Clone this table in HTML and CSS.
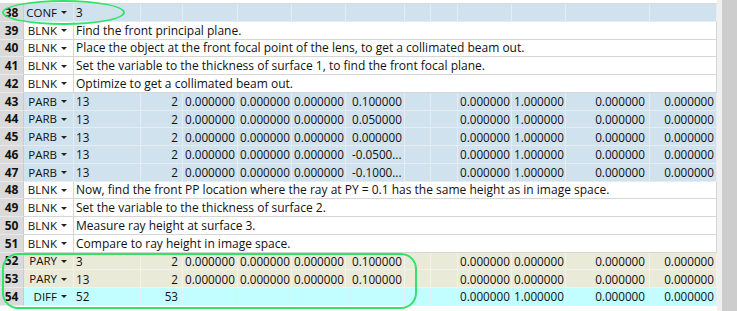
FILE: index.html
```html
<!DOCTYPE html>
<html lang="en">
<head>
<meta charset="utf-8">
<title>Merit Function Editor</title>
<link rel="stylesheet" href="styles.css">
</head>
<body>
<div class="editor">
  <div class="sheet">
    <div class="rows">
      <div class="row conf">
        <div class="c num">38</div><div class="c type">CONF<span class="caret"></span></div>
        <div class="c">3</div><div class="c"></div><div class="c"></div><div class="c"></div><div class="c"></div><div class="c"></div><div class="c"></div><div class="c"></div><div class="c"></div><div class="c"></div><div class="c"></div><div class="c"></div>
      </div>
      <div class="row blnk"><div class="c num">39</div><div class="c type">BLNK<span class="caret"></span></div><div class="c comment">Find the front principal plane.</div></div>
      <div class="row blnk"><div class="c num">40</div><div class="c type">BLNK<span class="caret"></span></div><div class="c comment">Place the object at the front focal point of the lens, to get a collimated beam out.</div></div>
      <div class="row blnk"><div class="c num">41</div><div class="c type">BLNK<span class="caret"></span></div><div class="c comment">Set the variable to the thickness of surface 1, to find the front focal plane.</div></div>
      <div class="row blnk"><div class="c num">42</div><div class="c type">BLNK<span class="caret"></span></div><div class="c comment">Optimize to get a collimated beam out.</div></div>

      <div class="row parb">
        <div class="c num">43</div><div class="c type">PARB<span class="caret"></span></div>
        <div class="c">13</div><div class="c r">2</div><div class="c">0.000000</div><div class="c">0.000000</div><div class="c">0.000000</div><div class="c f">0.100000</div><div class="c"></div><div class="c"></div><div class="c">0.000000</div><div class="c">1.000000</div><div class="c r">0.000000</div><div class="c r">0.000000</div>
      </div>
      <div class="row parb">
        <div class="c num">44</div><div class="c type">PARB<span class="caret"></span></div>
        <div class="c">13</div><div class="c r">2</div><div class="c">0.000000</div><div class="c">0.000000</div><div class="c">0.000000</div><div class="c f">0.050000</div><div class="c"></div><div class="c"></div><div class="c">0.000000</div><div class="c">1.000000</div><div class="c r">0.000000</div><div class="c r">0.000000</div>
      </div>
      <div class="row parb">
        <div class="c num">45</div><div class="c type">PARB<span class="caret"></span></div>
        <div class="c">13</div><div class="c r">2</div><div class="c">0.000000</div><div class="c">0.000000</div><div class="c">0.000000</div><div class="c f">0.000000</div><div class="c"></div><div class="c"></div><div class="c">0.000000</div><div class="c">1.000000</div><div class="c r">0.000000</div><div class="c r">0.000000</div>
      </div>
      <div class="row parb">
        <div class="c num">46</div><div class="c type">PARB<span class="caret"></span></div>
        <div class="c">13</div><div class="c r">2</div><div class="c">0.000000</div><div class="c">0.000000</div><div class="c">0.000000</div><div class="c f">-0.0500...</div><div class="c"></div><div class="c"></div><div class="c">0.000000</div><div class="c">1.000000</div><div class="c r">0.000000</div><div class="c r">0.000000</div>
      </div>
      <div class="row parb">
        <div class="c num">47</div><div class="c type">PARB<span class="caret"></span></div>
        <div class="c">13</div><div class="c r">2</div><div class="c">0.000000</div><div class="c">0.000000</div><div class="c">0.000000</div><div class="c f">-0.1000...</div><div class="c"></div><div class="c"></div><div class="c">0.000000</div><div class="c">1.000000</div><div class="c r">0.000000</div><div class="c r">0.000000</div>
      </div>

      <div class="row blnk"><div class="c num">48</div><div class="c type">BLNK<span class="caret"></span></div><div class="c comment">Now, find the front PP location where the ray at PY = 0.1 has the same height as in image space.</div></div>
      <div class="row blnk"><div class="c num">49</div><div class="c type">BLNK<span class="caret"></span></div><div class="c comment">Set the variable to the thickness of surface 2.</div></div>
      <div class="row blnk"><div class="c num">50</div><div class="c type">BLNK<span class="caret"></span></div><div class="c comment">Measure ray height at surface 3.</div></div>
      <div class="row blnk"><div class="c num">51</div><div class="c type">BLNK<span class="caret"></span></div><div class="c comment">Compare to ray height in image space.</div></div>

      <div class="row pary">
        <div class="c num">52</div><div class="c type">PARY<span class="caret"></span></div>
        <div class="c">3</div><div class="c r">2</div><div class="c">0.000000</div><div class="c">0.000000</div><div class="c">0.000000</div><div class="c f">0.100000</div><div class="c"></div><div class="c"></div><div class="c">0.000000</div><div class="c">0.000000</div><div class="c r">0.000000</div><div class="c r">0.000000</div>
      </div>
      <div class="row pary">
        <div class="c num">53</div><div class="c type">PARY<span class="caret"></span></div>
        <div class="c">13</div><div class="c r">2</div><div class="c">0.000000</div><div class="c">0.000000</div><div class="c">0.000000</div><div class="c f">0.100000</div><div class="c"></div><div class="c"></div><div class="c">0.000000</div><div class="c">0.000000</div><div class="c r">0.000000</div><div class="c r">0.000000</div>
      </div>
      <div class="row diff">
        <div class="c num">54</div><div class="c type">DIFF<span class="caret"></span></div>
        <div class="c">52</div><div class="c r">53</div><div class="c"></div><div class="c"></div><div class="c"></div><div class="c"></div><div class="c"></div><div class="c"></div><div class="c">0.000000</div><div class="c">1.000000</div><div class="c r">0.000000</div><div class="c r">0.000000</div>
      </div>
    </div>
  </div>
  <div class="vscroll"><div class="thumb"></div></div>
</div>
<div class="mark mark-conf"></div>
<div class="mark mark-group"></div>
</body>
</html>
```
FILE: styles.css
```css
* { box-sizing: border-box; margin: 0; padding: 0; }
html, body { background: #ffffff; }
body {
  width: 737px;
  height: 311px;
  overflow: hidden;
  position: relative;
  font-family: "Open Sans", "Noto Sans", sans-serif;
  font-size: 11.7px;
  color: #111111;
}
.editor { display: flex; height: 311px; }
.sheet { width: 717px; padding-top: 3px; }
.rows { border-top: 1px solid #dadada; }
.row {
  display: grid;
  grid-template-columns: 24px 50px 67px 42px 55px 54px 54px 59px 26px 27px 54px 54px 84px 67px;
  height: 17.75px;
  --line: #d9d9d9;
}
.c {
  display: flex;
  align-items: center;
  padding: 0 2px;
  border-right: 1px solid var(--line);
  border-bottom: 1px solid var(--line);
  white-space: nowrap;
  overflow: hidden;
  min-width: 0;
}
.c.r { justify-content: flex-end; padding-right: 4px; }
.c.f { padding-left: 6px; }
.row .c:last-child { padding-right: 2px; }
.num {
  justify-content: center;
  font-weight: 700;
  font-size: 12px;
  background: #dadada;
  color: #111;
  border-right-color: #cbcbcb;
  border-bottom-color: #e9e9e9;
  padding: 0;
}
.type { justify-content: flex-end; padding-right: 6px; gap: 4px; font-size: 11.5px; }
.caret {
  width: 0;
  height: 0;
  border-left: 3px solid transparent;
  border-right: 3px solid transparent;
  border-top: 3.5px solid #222;
  margin-top: 1px;
}
.comment { grid-column: 3 / -1; font-size: 12px; }
.blnk { background: #ffffff; --line: #d6d6d6; }
.conf, .parb { background: #d0e2ee; --line: #e5edf3; }
.pary { background: #eaead8; --line: #f3f3ea; }
.diff { background: #c2fdff; --line: #e3f3f3; }
.vscroll { width: 20px; background: #f0f0f0; padding-left: 5px; }
.thumb { height: 100%; background: #cdcdcd; }
.mark {
  position: absolute;
  border: 2px solid #33e26b;
}
.mark-conf { left: 2px; top: 0; width: 123px; height: 25px; border-radius: 50%; }
.mark-group { left: 2px; top: 253px; width: 415px; height: 56px; border-radius: 16px; }
```
